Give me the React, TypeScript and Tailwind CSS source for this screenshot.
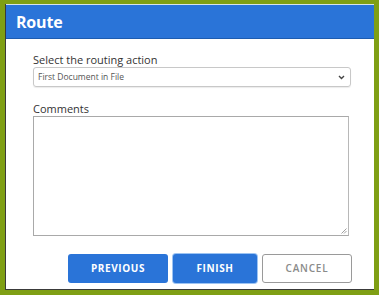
import React from "react";

export default function App() {
  return (
    <div
      className="w-[379px] h-[295px] bg-[#7f9f14] pt-[4px] pl-[5px] pr-[5px] pb-[5px]"
      style={{ fontFamily: '"Open Sans", "Noto Sans", sans-serif' }}
    >
      <div className="w-full h-full bg-white border-l border-b border-[#3a3a3a] flex flex-col">
        <div className="h-[35px] bg-[#2a74d8] border-t border-[#d8e4e8] border-b border-b-[#1d5cb0] flex items-center pl-[10px]">
          <span className="text-white font-bold text-[16px] leading-none tracking-[-0.2px]">Route</span>
        </div>
        <div className="flex flex-col pl-[27px] pr-[22px] pt-[14px]">
          <label className="text-[11px] leading-[14px] text-[#333]">Select the routing action</label>
          <div className="relative mr-[1px] h-[20px] border border-[#c8c8c8] rounded-[3px] flex items-center pl-[4px] shadow-[0_1px_1px_rgba(0,0,0,0.08)]">
            <span className="text-[8.5px] text-[#555]">First Document in File</span>
            <svg className="absolute right-[5px] top-[7px]" width="7" height="5" viewBox="0 0 7 5">
              <path d="M1 1 L3.5 3.5 L6 1" fill="none" stroke="#444" strokeWidth="1.4" />
            </svg>
          </div>
          <label className="mt-[15px] text-[11px] leading-[14px] text-[#333]">Comments</label>
          <div className="relative mr-[3px] h-[120px] border border-[#a9a9a9] border-r-[#b8b8b8]">
            <svg className="absolute right-[1px] bottom-[1px]" width="6" height="6" viewBox="0 0 6 6">
              <path d="M5.5 0.5 L0.5 5.5 M5.5 3 L3 5.5" stroke="#888" strokeWidth="0.8" />
            </svg>
          </div>
          <div className="mt-[18px] flex justify-end gap-[5px]">
            <button className="w-[100px] h-[29px] bg-[#2a74d8] rounded-[3px] text-white text-[10px] font-bold tracking-[0.6px]">
              PREVIOUS
            </button>
            <button className="w-[84px] h-[29px] bg-[#2a74d8] rounded-[3px] text-white text-[10px] font-bold tracking-[0.6px] ring-1 ring-[#9cc3f2]">
              FINISH
            </button>
            <button className="w-[90px] h-[29px] bg-white border border-[#9a9a9a] rounded-[3px] text-[#8a8a8a] text-[10px] font-semibold tracking-[0.8px]">
              CANCEL
            </button>
          </div>
        </div>
      </div>
    </div>
  );
}
